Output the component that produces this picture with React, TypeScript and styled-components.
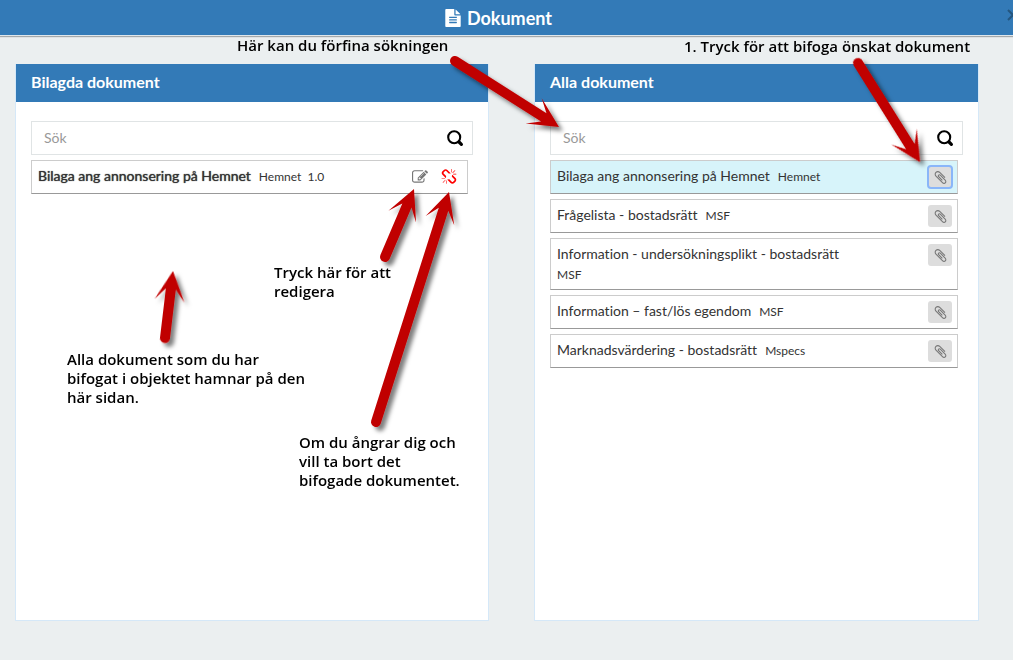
import React from "react";
import styled, { createGlobalStyle } from "styled-components";

const GlobalStyle = createGlobalStyle`
  *, *::before, *::after { box-sizing: border-box; }
  body {
    margin: 0;
    background: #ebeff0;
    color: #333;
    font-family: Lato, "Liberation Sans", sans-serif;
    font-size: 14px;
    line-height: 20px;
    font-variant-ligatures: none;
  }
`;

const ICONS = {
  file: "M1596 476q14 14 28 36h-472v-472q22 14 36 28zm-476 164h544v1056q0 40-28 68t-68 28h-1344q-40 0-68-28t-28-68v-1600q0-40 28-68t68-28h800v544q0 40 28 68t68 28zm160 736v-64q0-14-9-23t-23-9h-704q-14 0-23 9t-9 23v64q0 14 9 23t23 9h704q14 0 23-9t9-23zm0-256v-64q0-14-9-23t-23-9h-704q-14 0-23 9t-9 23v64q0 14 9 23t23 9h704q14 0 23-9t9-23zm0-256v-64q0-14-9-23t-23-9h-704q-14 0-23 9t-9 23v64q0 14 9 23t23 9h704q14 0 23-9t9-23z",
  edit: "M888 1184l116-116-152-152-116 116v56h96v96h56zm440-720q-16-16-33 1l-350 350q-17 17-1 33t33-1l350-350q17-17 1-33zm80 594v190q0 119-84.5 203.5t-203.5 84.5h-832q-119 0-203.5-84.5t-84.5-203.5v-832q0-119 84.5-203.5t203.5-84.5h832q63 0 117 25 15 7 18 23 3 17-9 29l-49 49q-14 14-32 8-23-6-45-6h-832q-66 0-113 47t-47 113v832q0 66 47 113t113 47h832q66 0 113-47t47-113v-126q0-13 9-22l64-64q15-15 35-7t20 29zm-96-738l288 288-672 672h-288v-288zm444 132l-92 92-288-288 92-92q28-28 68-28t68 28l152 152q28 28 28 68t-28 68z",
  unlink: "M503 1271l-256 256q-10 9-23 9-12 0-23-9-9-10-9-23t9-23l256-256q10-9 23-9t23 9q9 10 9 23t-9 23zm169 41v320q0 14-9 23t-23 9-23-9-9-23v-320q0-14 9-23t23-9 23 9 9 23zm-224-224q0 14-9 23t-23 9h-320q-14 0-23-9t-9-23 9-23 23-9h320q14 0 23 9t9 23zm1264 128q0 120-85 203l-147 146q-83 83-203 83-121 0-204-85l-334-335q-21-21-42-56l239-18 273 274q28 28 68 28t68-27l147-146q28-28 28-67 0-40-28-68l-274-275 18-239q35 21 56 42l336 336q84 86 84 204zm-617-724l-239 18-273-274q-28-28-68-28-39 0-68 27l-147 146q-28 28-28 67 0 40 28 68l274 274-18 240q-35-21-56-42l-336-336q-84-86-84-204 0-120 85-203l147-146q83-83 203-83 121 0 204 85l334 335q21 21 42 56zm633 84q0 14-9 23t-23 9h-320q-14 0-23-9t-9-23 9-23 23-9h320q14 0 23 9t9 23zm-544-544v320q0 14-9 23t-23 9-23-9-9-23v-320q0-14 9-23t23-9 23 9 9 23zm407 151l-256 256q-11 9-23 9t-23-9q-9-10-9-23t9-23l256-256q10-9 23-9t23 9q9 10 9 23t-9 23z",
  paperclip: "M1596 1385q0 117-79 196t-196 79q-135 0-235-100l-777-776q-113-115-113-271 0-159 110-270t269-111q158 0 273 113l605 606q10 10 10 22 0 16-30.5 46.5t-46.5 30.5q-13 0-23-10l-606-607q-79-77-181-77-106 0-179 75t-73 181q0 105 76 181l776 777q63 63 145 63 64 0 106-42t42-106q0-82-63-145l-581-581q-26-24-60-24-29 0-48 19t-19 48q0 32 25 59l410 410q10 10 10 22 0 16-31 47t-47 31q-12 0-22-10l-410-410q-63-61-63-149 0-82 57-139t139-57q88 0 149 63l581 581q100 98 100 235z",
};

const Svg = styled.svg`
  display: block;
  flex: none;
`;

function Icon({ name, size }: { name: keyof typeof ICONS; size: number }) {
  return (
    <Svg width={size} height={size} viewBox="0 0 1792 1792" fill="currentColor" aria-hidden="true">
      <path d={ICONS[name]} />
    </Svg>
  );
}

function SearchIcon() {
  return (
    <Svg width="17" height="17" viewBox="0 0 17 17" fill="none" stroke="#000" aria-hidden="true">
      <circle cx="7.2" cy="7.2" r="6" strokeWidth="2.1" />
      <path d="M12 12L14.4 14.4" strokeWidth="3.2" strokeLinecap="round" />
    </Svg>
  );
}

const Page = styled.div`
  position: relative;
  display: flex;
  flex-direction: column;
  min-height: 100vh;
  overflow: hidden;
`;

const TopBar = styled.header`
  display: grid;
  grid-template-columns: 1fr auto 1fr;
  align-items: center;
  height: 36px;
  background: #337ab7;
  border-bottom: 1px solid #dfe7ec;
  box-shadow: 0 1px 1px #a4a8aa;
  color: #fff;
`;

const PageTitle = styled.h1`
  grid-column: 2;
  display: flex;
  align-items: center;
  gap: 5px;
  margin: 0 17px 0 0;
  font-size: 18px;
  font-weight: 700;
  line-height: 20px;
`;

const CloseButton = styled.button`
  justify-self: end;
  margin: 0 -6px 6px 0;
  padding: 0;
  border: 0;
  background: none;
  color: #24567f;
`;

const Columns = styled.main`
  flex: 1;
  display: grid;
  grid-template-columns: 474fr 445fr;
  gap: 45px;
  padding: 28px 34px 39px 15px;
`;

const Panel = styled.section`
  display: flex;
  flex-direction: column;
  background: #fff;
  border: 1px solid #d5e8f8;
  border-top: 0;
`;

const PanelTitle = styled.h2`
  margin: 0;
  padding: 8px 15px 10px;
  background: #337ab7;
  color: #fff;
  font-size: 16px;
  font-weight: 700;
  line-height: 20px;
`;

const PanelBody = styled.div`
  padding: 19px 15px;
`;

const SearchForm = styled.form`
  display: flex;
  align-items: center;
  height: 34px;
  border: 1px solid #e0e4e5;
`;

const SearchInput = styled.input`
  flex: 1;
  min-width: 0;
  padding: 0 12px;
  border: 0;
  outline: 0;
  background: none;
  color: #333;
  font: inherit;
  &::placeholder { color: #999; opacity: 1; }
`;

const SearchButton = styled.button`
  padding: 0 8px;
  border: 0;
  background: none;
`;

const List = styled.ul`
  display: flex;
  flex-direction: column;
  gap: 5px;
  margin: 5px 5px 0 0;
  padding: 0;
  list-style: none;
`;

const Row = styled.li<{ $selected?: boolean }>`
  display: flex;
  justify-content: space-between;
  align-items: flex-start;
  min-height: 34px;
  padding: 5px 5px 5px 6px;
  border: 1px solid #ccc;
  border-bottom-color: #999;
  background: ${(p) => (p.$selected ? "#d7f4fa" : "#fff")};
`;

const RowText = styled.div`
  max-width: 76%;
`;

const DocName = styled.span<{ $strong?: boolean }>`
  margin-right: 8px;
  text-shadow: ${(p) => (p.$strong ? "0 0 1px #333" : "none")};
`;

const Source = styled.small`
  display: inline-block;
  font-size: 12px;
  line-height: 16px;
`;

const Actions = styled.div`
  display: flex;
  gap: 13px;
  padding: 3px 5px 0 0;
`;

const IconButton = styled.button<{ $danger?: boolean }>`
  padding: 0;
  border: 0;
  background: none;
  color: ${(p) => (p.$danger ? "#f00" : "#777")};
`;

const AttachButton = styled.button<{ $focused?: boolean }>`
  display: flex;
  align-items: center;
  justify-content: center;
  width: 24px;
  height: 22px;
  padding: 0;
  border: 0;
  border-radius: 3px;
  background: #ddd;
  color: #777;
  outline: ${(p) => (p.$focused ? "2px solid #8ab6f9" : "none")};
  outline-offset: -1px;
`;

const Arrows = styled.svg`
  position: absolute;
  top: 0;
  left: 0;
  pointer-events: none;
`;

const Note = styled.p<{ $x: number; $y: number }>`
  position: absolute;
  left: ${(p) => p.$x}px;
  top: ${(p) => p.$y}px;
  margin: 0;
  color: #000;
  font-family: "Open Sans", "Noto Sans", sans-serif;
  font-size: 15px;
  font-weight: 600;
  line-height: 19px;
  white-space: pre;
`;

type ArrowSpec = { from: [number, number]; to: [number, number] };

const ARROWS: ArrowSpec[] = [
  { from: [455, 61], to: [559, 127] },
  { from: [858, 63], to: [920, 162] },
  { from: [165, 338], to: [173, 271] },
  { from: [385, 257], to: [414, 189] },
  { from: [376, 422], to: [449, 192] },
];

/* The arrow is drawn pointing right with its tip at the origin, then turned. */
function Arrow({ from, to }: ArrowSpec) {
  const dx = to[0] - from[0];
  const dy = to[1] - from[1];
  const len = Math.hypot(dx, dy);
  const angle = (Math.atan2(dy, dx) * 180) / Math.PI;
  return (
    <path
      transform={`translate(${to[0]} ${to[1]}) rotate(${angle})`}
      d={`M0 0L-30 -15L-18 -5H${-len}A5 5 0 0 0 ${-len} 5H-18L-30 15Z`}
    />
  );
}

const NOTES = [
  { x: 237, y: 36, text: "Här kan du förfina sökningen" },
  { x: 684, y: 37, text: "1. Tryck för att bifoga önskat dokument" },
  { x: 274, y: 263, text: "Tryck här för att\nredigera" },
  { x: 67, y: 350, text: "Alla dokument som du har\nbifogat i objektet hamnar på den\nhär sidan." },
  { x: 299, y: 433, text: "Om du ångrar dig och\nvill ta bort det\nbifogade dokumentet." },
];

const DOCUMENTS = [
  { name: "Bilaga ang annonsering på Hemnet", source: "Hemnet" },
  { name: "Frågelista - bostadsrätt", source: "MSF" },
  { name: "Information - undersökningsplikt - bostadsrätt", source: "MSF" },
  { name: "Information – fast/lös egendom", source: "MSF" },
  { name: "Marknadsvärdering - bostadsrätt", source: "Mspecs" },
];

function Search({ label }: { label: string }) {
  return (
    <SearchForm role="search" onSubmit={(e) => e.preventDefault()}>
      <SearchInput type="text" placeholder="Sök" aria-label={label} />
      <SearchButton type="submit" aria-label="Sök">
        <SearchIcon />
      </SearchButton>
    </SearchForm>
  );
}

export default function App() {
  return (
    <Page>
      <GlobalStyle />
      <TopBar>
        <PageTitle>
          <Icon name="file" size={18} />
          Dokument
        </PageTitle>
        <CloseButton type="button" aria-label="Stäng">
          <Svg width="12" height="12" viewBox="0 0 12 12" stroke="currentColor" strokeWidth="2" aria-hidden="true">
            <path d="M1 1L11 11M11 1L1 11" />
          </Svg>
        </CloseButton>
      </TopBar>
      <Columns>
        <Panel>
          <PanelTitle>Bilagda dokument</PanelTitle>
          <PanelBody>
            <Search label="Sök bland bilagda dokument" />
            <List>
              <Row>
                <RowText>
                  <DocName $strong>Bilaga ang annonsering på Hemnet</DocName>
                  <Source>Hemnet&nbsp; 1.0</Source>
                </RowText>
                <Actions>
                  <IconButton type="button" aria-label="Redigera">
                    <Icon name="edit" size={16} />
                  </IconButton>
                  <IconButton type="button" aria-label="Ta bort" $danger>
                    <Icon name="unlink" size={16} />
                  </IconButton>
                </Actions>
              </Row>
            </List>
          </PanelBody>
        </Panel>
        <Panel>
          <PanelTitle>Alla dokument</PanelTitle>
          <PanelBody>
            <Search label="Sök bland alla dokument" />
            <List>
              {DOCUMENTS.map((doc, i) => (
                <Row key={doc.name} $selected={i === 0}>
                  <RowText>
                    <DocName>{doc.name}</DocName>
                    <Source>{doc.source}</Source>
                  </RowText>
                  <AttachButton type="button" aria-label={`Bifoga ${doc.name}`} $focused={i === 0}>
                    <Icon name="paperclip" size={15} />
                  </AttachButton>
                </Row>
              ))}
            </List>
          </PanelBody>
        </Panel>
      </Columns>
      <Arrows width="1000" height="450" viewBox="0 0 1000 450" fill="#c00000" aria-hidden="true">
        <defs>
          <filter id="arrow-shadow" x="-10%" y="-10%" width="120%" height="120%">
            <feDropShadow dx="4" dy="4" stdDeviation="2" floodColor="#000" floodOpacity="0.5" />
          </filter>
        </defs>
        <g filter="url(#arrow-shadow)">
          {ARROWS.map((a) => (
            <Arrow key={a.to.join()} {...a} />
          ))}
        </g>
      </Arrows>
      {NOTES.map((n) => (
        <Note key={n.text} $x={n.x} $y={n.y}>
          {n.text}
        </Note>
      ))}
    </Page>
  );
}
